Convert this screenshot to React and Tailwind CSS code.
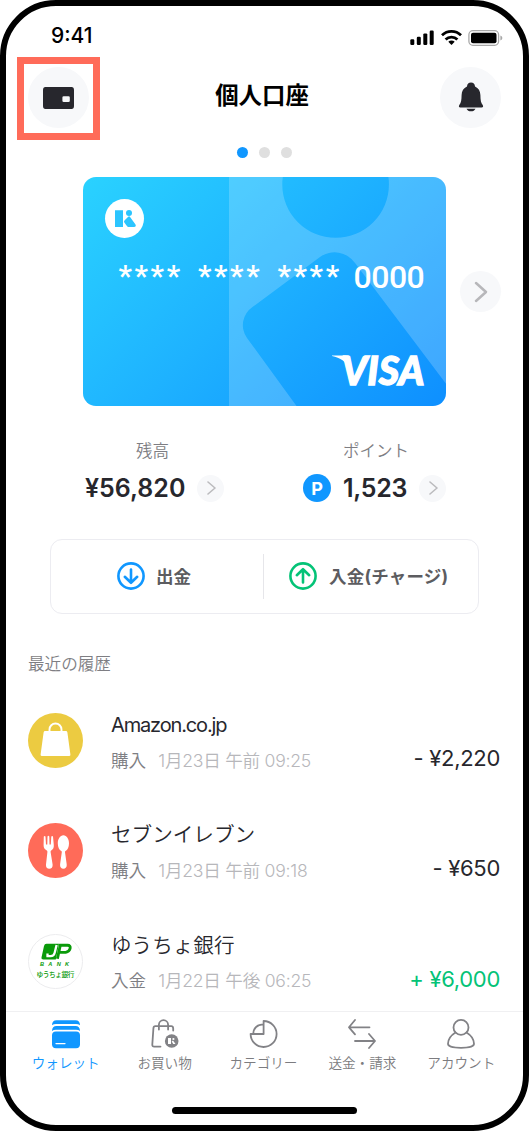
import React from "react";

function StatusBar() {
  return (
    <div className="flex h-[51px] shrink-0 items-start justify-between pl-[45px] pr-[20px]">
      <span className="mt-[18px] text-[21px] leading-6 font-[550] tracking-[0px] text-black">9:41</span>
      <svg className="mt-[22px] h-5 w-[94px]" viewBox="0 0 94 20">
        <g transform="translate(1 0)">
          <rect x="0.3" y="11.3" width="4" height="5.7" rx="1.2" />
          <rect x="6.8" y="8.8" width="4" height="8.2" rx="1.2" />
          <rect x="13.3" y="5.4" width="4" height="11.6" rx="1.2" />
          <rect x="19.7" y="2.6" width="4" height="14.4" rx="1.2" />
        </g>
        <g transform="translate(32 0)" fill="none" stroke="#000" strokeWidth="2.8">
          <path d="M1 7.3a13.6 13.6 0 0 1 19 0" />
          <path d="M4.6 11.600a8.4 8.4 0 0 1 11.800 0" />
          <path d="M7.3 13.8a4.6 4.6 0 0 1 6.4 0l-3.2 3.3z" fill="#000" stroke="none" />
        </g>
        <rect x="59.900" y="2.700" width="29.700" height="14.600" rx="4" fill="none" stroke="#a8a8a8" strokeWidth="1.300" />
        <rect x="62" y="4.700" width="25.500" height="10.600" rx="2" />
        <path d="M91.4 7.4q2 .6 2 2.500t-2 2.500z" fill="#a8a8a8" />
      </svg>
    </div>
  );
}

function Header() {
  return (
    <div className="flex h-[83px] shrink-0 items-center justify-between pl-[11px] pr-[22px]">
      <div className="flex h-[83px] w-[83px] items-center justify-center border-[7px] border-[#ff6b59] pb-[2px]">
        <div className="flex h-[61px] w-[61px] items-center justify-center rounded-full bg-[#f7f8fa]">
          <svg className="h-[22px] w-[31px]" viewBox="0 0 31 22">
            <path fillRule="evenodd" fill="#27272d" d="M3.2 0h24.6A3 3 0 0 1 31 3v16a3 3 0 0 1-3.200 3H3.200A3 3 0 0 1 0 19V3a3 3 0 0 1 3.200-3zM20.700 9.300a1.300 1.300 0 0 0-1.300 1.300v3.200a1.300 1.300 0 0 0 1.300 1.300h4.800a1.300 1.300 0 0 0 1.300-1.300v-3.200a1.300 1.300 0 0 0-1.300-1.300z" />
          </svg>
        </div>
      </div>
      <h1 className="mb-[5px] ml-[-16px] text-[23.400px] leading-8 font-bold text-black">個人口座</h1>
      <div className="mb-[2px] flex h-[61px] w-[61px] items-center justify-center rounded-full bg-[#f7f8fa]">
        <svg className="mb-[2px] h-[30px] w-[26px]" viewBox="0 0 26 30">
          <path fill="#27272d" d="M13 .6c2.300 0 3.900 1.500 4 3.900 3.500 1.500 5.300 4.500 5.400 8.500.1 5 .5 8 2.300 10 .8 1.300.4 2.500-1 2.500H2.300c-1.400 0-1.800-1.200-1-2.500 1.800-2 2.200-5 2.300-10 .1-4 1.900-7 5.400-8.500C9.100 2.100 10.700.6 13 .6zM8.500 26.700h9c-.7 1.700-2.400 2.600-4.500 2.600s-3.800-.9-4.500-2.600z" />
        </svg>
      </div>
    </div>
  );
}

function Kyash({ className, fg }) {
  return (
    <svg className={className} viewBox="0 0 39 39">
      <g fill={fg}>
        <path d="M10 11.300h8v16.700h-8z" />
        <circle cx="24" cy="13.900" r="3" />
        <path d="M23.500 17.600q.8-.6 1.400.2l5.600 7.800q1 2.400-1.500 2.400h-5.500q-1 0-1.600-.9l-2.600-3.700q-.8-1.300.4-2.200z" />
      </g>
    </svg>
  );
}

function Card() {
  return (
    <div className="relative h-[229px] w-[363px] overflow-hidden rounded-[13px] bg-[linear-gradient(135deg,#2ad2ff_0%,#1eb2ff_48%,#0e8fff_100%)]">
      <svg className="absolute inset-0 h-full w-full" viewBox="0 0 363 229">
        <path
          fill="#fff"
          fillOpacity="0.2"
          fillRule="evenodd"
          d="M146 0H363V229H146zM199.300 7.500a53.300 53.300 0 0 0 106.600 0a53.300 53.300 0 0 0-106.600 0zM231 253L164 161A22 22 0 0 1 169.500 130L237 80A25 25 0 0 1 272 86L400 256z"
        />
      </svg>
      <div className="relative flex h-full flex-col pl-[22px] pr-[17px] pt-[22px]">
        <div className="h-[39px] w-[39px] rounded-full bg-white">
          <Kyash className="h-[39px] w-[39px]" fg="#2cc5ff" />
        </div>
        <div className="mt-[20px] flex h-[38px] items-center font-['Roboto'] text-white">
          <span className="mb-[3px] ml-[13.500px] w-[79.500px] text-[30px] leading-9 font-semibold tracking-[2.600px]">****</span>
          <span className="mb-[3px] w-[79.500px] text-[30px] leading-9 font-semibold tracking-[2.600px]">****</span>
          <span className="mb-[3px] w-[76px] text-[30px] leading-9 font-semibold tracking-[2.600px]">****</span>
          <span className="text-[32px] leading-9 font-medium tracking-[-0.500px]">0000</span>
        </div>
        <svg className="mt-[45px] h-[54px] w-[102px] shrink-0 self-end" viewBox="0 -9 102 54">
          <path fill="#fff" d="M5 5.500h13q3 .2 3.600 3l2 12C20 12 13 7.500 5 6.100z" />
          <text x="14.500" y="34.500" textLength="83" lengthAdjust="spacingAndGlyphs" fill="#fff" stroke="#fff" strokeWidth="1.300" fontFamily="Lato" fontSize="39.500" fontWeight="900" fontStyle="italic">VISA</text>
        </svg>
      </div>
    </div>
  );
}

function Chevron({ size }) {
  return size === "lg" ? (
    <div className="flex h-[41px] w-[41px] items-center justify-center rounded-full bg-[#f7f8fa]">
      <svg className="h-[22px] w-[14px]" viewBox="0 0 14 22" fill="none" stroke="#b7b7ba" strokeWidth="2.500" strokeLinecap="round" strokeLinejoin="round">
        <path d="M2 2l10 9-10 9" />
      </svg>
    </div>
  ) : (
    <div className="flex h-[27px] w-[27px] items-center justify-center rounded-full bg-[#f7f8fa]">
      <svg className="ml-[1px] h-[14px] w-[9px]" viewBox="0 0 9 14" fill="none" stroke="#bbbbbe" strokeWidth="1.600" strokeLinecap="round" strokeLinejoin="round">
        <path d="M1 1l7 6-7 6" />
      </svg>
    </div>
  );
}

function Balances() {
  return (
    <div className="flex h-[133px] shrink-0 pt-[33px]">
      <div className="ml-[79px] flex w-[139px] flex-col">
        <span className="ml-[51px] text-[16.500px] leading-6 font-[350] text-[#7e7e83]">残高</span>
        <div className="mt-[11px] flex h-[28px] items-center justify-between">
          <span className="mt-px text-[25px] font-semibold tracking-[0px] text-[#27272d]">¥56,820</span>
          <Chevron />
        </div>
      </div>
      <div className="ml-[79px] flex w-[143px] flex-col">
        <span className="ml-[40px] text-[16.500px] leading-6 font-[350] text-[#7e7e83]">ポイント</span>
        <div className="mt-[11px] flex h-[28px] items-center">
          <span className="flex h-[28px] w-[28px] items-center justify-center rounded-full bg-[#1097ff] text-[18px] font-bold text-white">P</span>
          <span className="mt-px ml-[12px] flex-1 text-[25px] font-semibold tracking-[-0.300px] text-[#27272d]">1,523</span>
          <Chevron />
        </div>
      </div>
    </div>
  );
}

function ArrowCircle({ color, up }) {
  return (
    <svg className="mb-[2px] h-7 w-7" viewBox="0 0 28 28" fill="none" stroke={color} strokeWidth="2.600" strokeLinecap="round" strokeLinejoin="round">
      <circle cx="14" cy="14" r="12.600" />
      {up ? <path d="M14 20.500V7.500M7.800 13.200L14 7.200l6.200 6" /> : <path d="M14 7.500v13M7.800 14.800l6.200 6 6.200-6" />}
    </svg>
  );
}

function Actions() {
  return (
    <div className="ml-[44px] flex h-[75px] w-[429px] shrink-0 items-center rounded-[12px] border-[1.500px] border-[#ececf1] text-[17.500px] font-bold text-[#5c5c60]">
      <div className="flex h-[45px] w-[213px] items-center border-r border-[#e6e6ea] pl-[66px]">
        <ArrowCircle color="#1097ff" />
        <span className="mt-[2px] ml-[11px]">出金</span>
      </div>
      <div className="flex h-[45px] items-center pl-[25px]">
        <ArrowCircle color="#04c377" up />
        <span className="mt-[2px] ml-[12px] tracking-[0.200px] whitespace-nowrap">入金(チャージ)</span>
      </div>
    </div>
  );
}

function BagIcon() {
  return (
    <svg className="h-[55px] w-[55px]" viewBox="0 0 55 55">
      <circle cx="27.500" cy="27.500" r="27.500" fill="#eccb41" />
      <path fill="#fff" d="M17.200 18h20.600q1.400 0 1.600 1.400l3 22q.2 1.600-1.400 1.600H14q-1.600 0-1.400-1.600l3-22q.2-1.400 1.600-1.400z" />
      <path fill="none" stroke="#fff" strokeWidth="1.900" d="M21.500 19v-2.500a6 6 0 0 1 12 0V19" />
    </svg>
  );
}

function CutleryIcon() {
  return (
    <svg className="h-[55px] w-[55px]" viewBox="0 0 55 55">
      <circle cx="27.500" cy="27.500" r="27.500" fill="#ff6b59" />
      <g fill="#fff">
        <path d="M15.800 13.500q.9-1.200 1.700 0l.5 8h1.300l.2-8q.9-1.300 1.800 0l.2 8h1.300l.5-8q.9-1.200 1.700 0l.8 8.500c.2 2.800-.8 4.600-2.600 5.400-.5.300-.6.800-.6 1.500l2 12.600c.4 2.800-1.200 4.200-3.300 4.200s-3.700-1.400-3.300-4.200l1.400-12.600c0-.7-.1-1.200-.6-1.500-2-.8-3.300-2.500-3.200-5.400z" />
        <path d="M35.400 12.300c3.300 0 5.600 3.800 5.600 8.200 0 3.700-1.400 6.500-3.500 7.500-.4.300-.6.600-.5 1.200l1.700 12c.4 2.900-1.200 4.500-3.300 4.500s-3.700-1.600-3.300-4.500l1.700-12c.1-.6-.1-.9-.5-1.200-2.100-1-3.500-3.800-3.500-7.500 0-4.400 2.300-8.200 5.600-8.200z" />
      </g>
    </svg>
  );
}

function BankIcon() {
  return (
    <svg className="h-[55px] w-[55px]" viewBox="0 0 55 55">
      <circle cx="27.500" cy="27.500" r="27" fill="#fff" stroke="#ececee" />
      <path fill="#0a9a0a" d="M18.500 9.800H31L27.800 25.500H15.500Q13 25.500 13.600 23L16 12Q16.500 9.800 18.500 9.800z" />
      <path fill="none" stroke="#fff" strokeWidth="2.300" d="M28.600 11L26.600 19q-.8 3.200-4 3.200H19.500V19.500" />
      <path fill="none" stroke="#0a9a0a" strokeWidth="2.900" d="M29.400 24.800L32.300 11.300H39.500q3.300 0 2.600 3.200t-4.400 3.900H32" />
      <text x="12" y="32.300" textLength="29" fill="#0a9a0a" fontFamily="Liberation Sans" fontSize="5.600" fontWeight="700" fontStyle="italic">BANK</text>
      <text x="8.500" y="43.300" textLength="38" fill="#0a9a0a" fontFamily="Noto Sans CJK JP" fontSize="6.700" fontWeight="500">ゆうちょ銀行</text>
    </svg>
  );
}

const rows = [
  { icon: <BagIcon />, title: "Amazon.co.jp", kind: "購入", date: "1月23日 午前 09:25", amount: "- ¥2,220", latin: true },
  { icon: <CutleryIcon />, title: "セブンイレブン", kind: "購入", date: "1月23日 午前 09:18", amount: "- ¥650" },
  { icon: <BankIcon />, title: "ゆうちょ銀行", kind: "入金", date: "1月22日 午後 06:25", amount: "+ ¥6,000", income: true },
];

function History() {
  return (
    <div className="flex h-[397px] shrink-0 flex-col pl-[22px] pr-[23px] pt-[38px]">
      <h2 className="text-[16.600px] leading-6 font-[350] text-[#7e7e83]">最近の履歴</h2>
      <div className="mt-[37px] flex flex-col">
        {rows.map((r) => (
          <div key={r.title} className="flex h-[110.300px] items-start">
            {r.icon}
            <div className="ml-7 flex flex-col">
              <span className={r.latin ? "text-[20px] leading-6 tracking-[-1.150px] text-[#27272d]" : "text-[20.600px] leading-6 font-[350] text-[#27272d]"}>{r.title}</span>
              <div className="mt-3 flex h-6 items-center text-[17.600px] font-[350] whitespace-nowrap">
                <span className="text-[#7e7e83]">{r.kind}</span>
                <span className="ml-3 tracking-[-0.250px] text-[#b7b7bb]">{r.date}</span>
              </div>
            </div>
            <span className={r.income ? "mt-[33px] ml-auto text-[22px] leading-6 tracking-[-0.300px] text-[#04c377]" : "mt-[33px] ml-auto text-[22px] leading-6 tracking-[-0.300px] text-[#27272d]"}>{r.amount}</span>
          </div>
        ))}
      </div>
    </div>
  );
}

const tabs = [
  {
    label: "ウォレット",
    icon: (
      <svg className="h-[30px] w-[30px]" viewBox="0 0 30 30" fill="#1097ff">
        <path d="M1 6.200Q1.200 1.300 5.500 1.300h19Q28.800 1.300 29 6.200q-1.500-1.300-4-1.300H5q-2.500 0-4 1.300z" />
        <path d="M1 12q.2-4.900 4.500-4.900h19Q28.800 7.100 29 12q-1.500-1.300-4-1.300H5Q2.500 10.700 1 12z" />
        <rect x="1" y="12.600" width="28" height="16.600" rx="4" />
        <path d="M5 24.600h9" stroke="#fff" strokeWidth="1.300" strokeLinecap="round" />
      </svg>
    ),
  },
  {
    label: "お買い物",
    icon: (
      <svg className="h-[30px] w-[30px]" viewBox="0 0 30 30" fill="none" stroke="#828286" strokeWidth="1.800" strokeLinecap="round" strokeLinejoin="round">
        <path d="M10.500 27.600H4.200q-2 0-1.900-2L3.400 9.500q.1-2.300 2-2.300h15.800q1.900 0 2 2.300v2M8.900 10.500V5.800a4.600 4.600 0 0 1 9.200 0v4.700" />
        <circle cx="21.700" cy="22" r="6.800" fill="#828286" stroke="none" />
        <g fill="#fff" stroke="none">
          <rect x="18" y="19" width="3" height="6" />
          <circle cx="23.400" cy="20" r="1.100" />
          <path d="M23 21.500l2.500 3.500h-2.300l-1.500-2.400z" />
        </g>
      </svg>
    ),
  },
  {
    label: "カテゴリー",
    icon: (
      <svg className="h-[30px] w-[30px]" viewBox="0 0 30 30" fill="none" stroke="#828286" strokeWidth="1.800" strokeLinejoin="round">
        <path d="M15.600 2a13 13 0 1 1-13 13h13zM5.300 14.500q.5-8.500 9.800-9.200" />
      </svg>
    ),
  },
  {
    label: "送金・請求",
    icon: (
      <svg className="h-[30px] w-[30px]" viewBox="0 0 30 30" fill="none" stroke="#828286" strokeWidth="1.800" strokeLinecap="round" strokeLinejoin="round">
        <path d="M22.500 8.300H2M8 1L2 8.300l6 7M8 22h20M22 15l6 7-6 7" />
      </svg>
    ),
  },
  {
    label: "アカウント",
    icon: (
      <svg className="h-[30px] w-[30px]" viewBox="0 0 30 30" fill="none" stroke="#828286" strokeWidth="1.800" strokeLinecap="round">
        <circle cx="15" cy="8.400" r="7.500" />
        <path d="M9.500 13.400C4.500 16.500 2 20.500 2 24.800c0 2.700 5 4 13 4s13-1.300 13-4c0-4.300-2.500-8.300-7.500-11.400" />
      </svg>
    ),
  },
];

function TabBar() {
  return (
    <div className="flex h-[116px] shrink-0 flex-col items-center border-t border-[#f0f0f2] pt-[7px]">
      <nav className="mr-[2px] grid w-[494.500px] grid-cols-5">
        {tabs.map((t, i) => (
          <div key={t.label} className="flex flex-col items-center">
            {t.icon}
            <span className={i === 0 ? "mt-[4px] text-[13.600px] leading-5 font-[350] text-[#1097ff]" : "mt-[4px] text-[13.600px] leading-5 font-[350] text-[#7c7c80]"}>{t.label}</span>
          </div>
        ))}
      </nav>
      <div className="mt-[34px] h-[7px] w-[185px] rounded-full bg-black" />
    </div>
  );
}

export default function App() {
  return (
    <div className="h-[1131px] w-[529px] bg-white font-['Inter','Noto_Sans_CJK_JP',sans-serif]">
      <div className="flex h-[1131px] w-[529px] flex-col overflow-hidden rounded-[56px] border-[6px] border-black bg-white">
        <StatusBar />
        <Header />
        <div className="flex h-[37px] shrink-0 justify-center gap-[11px] pt-[7px]">
          <span className="h-[11px] w-[11px] rounded-full bg-[#1097ff]" />
          <span className="h-[11px] w-[11px] rounded-full bg-[#dfdfdf]" />
          <span className="h-[11px] w-[11px] rounded-full bg-[#dfdfdf]" />
        </div>
        <div className="flex h-[229px] shrink-0 items-center gap-[14px] pl-[77px]">
          <Card />
          <Chevron size="lg" />
        </div>
        <Balances />
        <Actions />
        <History />
        <TabBar />
      </div>
    </div>
  );
}
